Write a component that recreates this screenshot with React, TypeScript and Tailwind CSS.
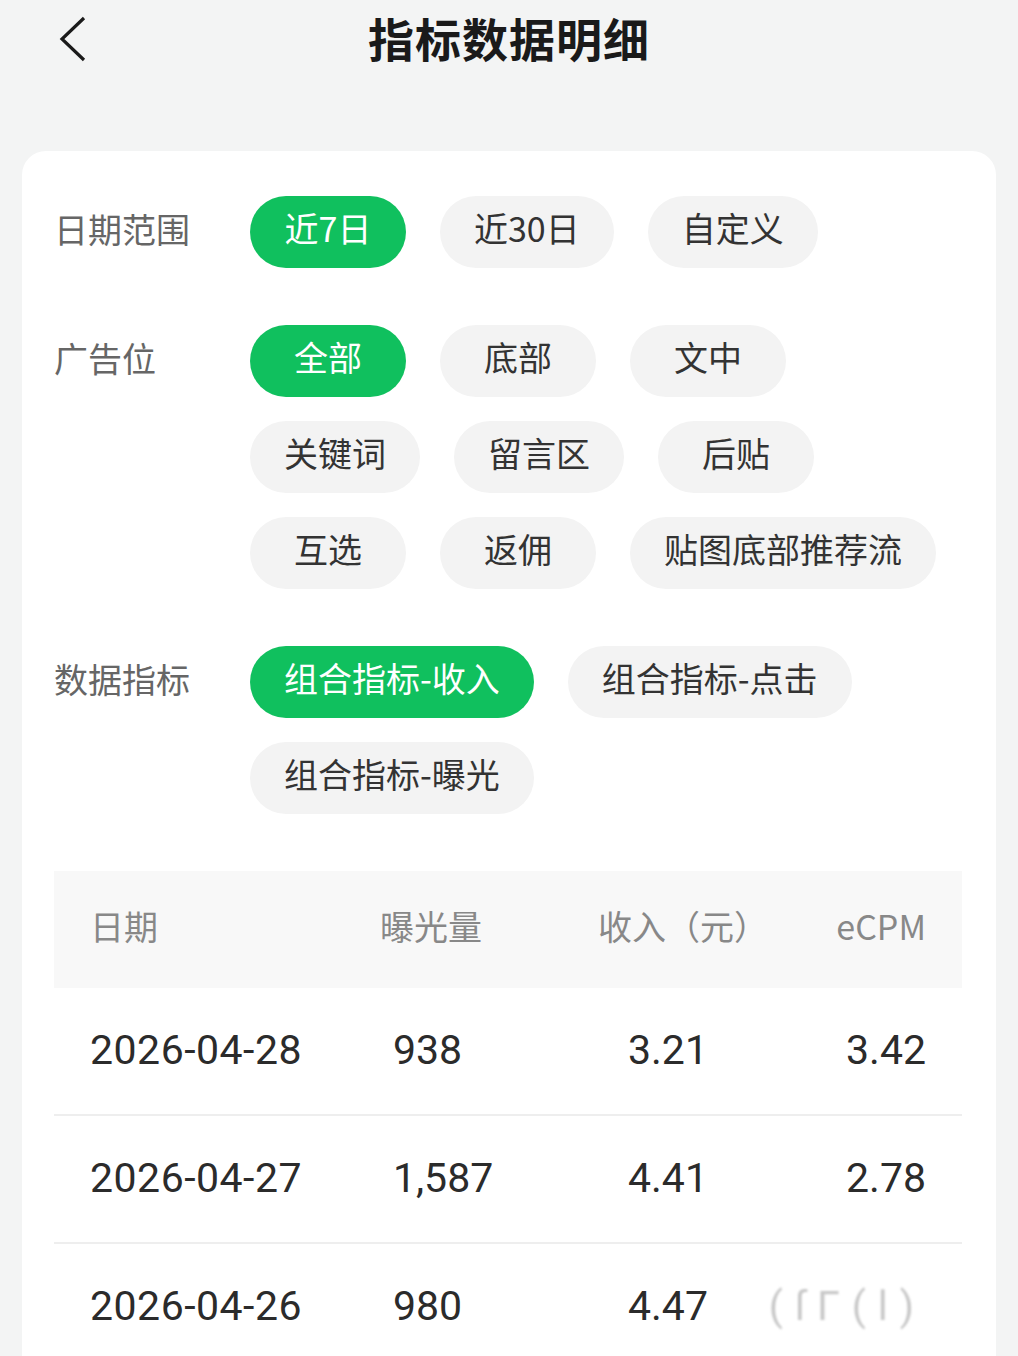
import { useState } from "react";

const chipBase =
  "h-[72px] min-w-[156px] px-[34px] pb-[8px] rounded-full flex items-center justify-center text-[34px] leading-none whitespace-nowrap";

type Group = { label: string; options: string[] };

const groups: Group[] = [
  { label: "日期范围", options: ["近7日", "近30日", "自定义"] },
  {
    label: "广告位",
    options: ["全部", "底部", "文中", "关键词", "留言区", "后贴", "互选", "返佣", "贴图底部推荐流"],
  },
  { label: "数据指标", options: ["组合指标-收入", "组合指标-点击", "组合指标-曝光"] },
];

const rows = [
  { date: "2026-04-28", views: "938", income: "3.21", ecpm: "3.42" },
  { date: "2026-04-27", views: "1,587", income: "4.41", ecpm: "2.78" },
  { date: "2026-04-26", views: "980", income: "4.47", ecpm: "" },
];

const App = () => {
  const [selected, setSelected] = useState<Record<string, string>>({
    日期范围: "近7日",
    广告位: "全部",
    数据指标: "组合指标-收入",
  });

  return (
    <div
      className="min-h-[1356px] bg-[#f3f4f4] text-[#333]"
      style={{ fontFamily: '"Noto Sans CJK SC", "Noto Sans", sans-serif' }}
    >
      {/* Header */}
      <header className="relative h-[82px] flex items-center justify-center pb-[8px]">
        <button className="absolute left-[54px] top-[16px] w-[36px] h-[46px] flex items-center justify-center">
          <svg width="30" height="46" viewBox="0 0 30 46" fill="none">
            <path d="M27 2 L5 23 L27 44" stroke="#1a1a1a" strokeWidth="3.2" strokeLinejoin="miter" />
          </svg>
        </button>
        <h1 className="text-[46px] font-bold text-[#1a1a1a] leading-none tracking-[1px]">指标数据明细</h1>
      </header>

      {/* Card */}
      <div className="mx-[22px] mt-[69px] bg-white rounded-[24px] pt-[45px] pl-[32px] pr-[34px] pb-[40px]">
        <div className="flex flex-col gap-[57px]">
          {groups.map((g) => (
            <div key={g.label} className="flex">
              <div className="w-[196px] shrink-0 h-[72px] pb-[8px] flex items-center text-[34px] text-[#666]">
                {g.label}
              </div>
              <div className="flex flex-wrap gap-x-[34px] gap-y-[24px] flex-1">
                {g.options.map((o) => {
                  const active = selected[g.label] === o;
                  return (
                    <button
                      key={o}
                      onClick={() => setSelected((s) => ({ ...s, [g.label]: o }))}
                      className={`${chipBase} ${
                        active ? "bg-[#10c05e] text-white" : "bg-[#f3f3f3] text-[#333]"
                      }`}
                    >
                      {o}
                    </button>
                  );
                })}
              </div>
            </div>
          ))}
        </div>

        {/* Table */}
        <div className="mt-[57px]">
          <div className="h-[117px] bg-[#f8f8f8] px-[36px] pb-[8px] grid grid-cols-[290px_218px_1fr_auto] items-center text-[34px] text-[#888]">
            <span>日期</span>
            <span>曝光量</span>
            <span>收入（元）</span>
            <span className="text-right">eCPM</span>
          </div>
          {rows.map((r) => (
            <div
              key={r.date}
              className="h-[128px] border-b-2 border-[#eeeeee] px-[36px] grid grid-cols-[303px_235px_1fr_auto] items-center text-[41px] text-[#2b2b2b]"
              style={{ fontFamily: 'Roboto, "Noto Sans CJK SC", sans-serif' }}
            >
              <span className="tracking-[0.5px]">{r.date}</span>
              <span>{r.views}</span>
              <span>{r.income}</span>
              <span className="text-right">
                {r.ecpm || <span className="text-[#c8c8c8] blur-[1px] tracking-[12px]">(ſΓ(l)</span>}
              </span>
            </div>
          ))}
        </div>
      </div>
    </div>
  );
};

export default App;
